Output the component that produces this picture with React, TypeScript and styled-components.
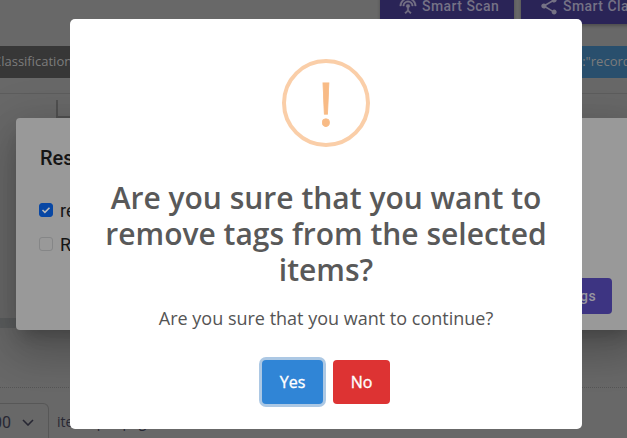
import React from 'react';
import styled, { createGlobalStyle } from 'styled-components';

const GlobalStyle = createGlobalStyle`
  * { box-sizing: border-box; }
  html, body { margin: 0; overflow: hidden; background: #686868; }
  body { font-family: 'Open Sans', 'Noto Sans', sans-serif; }
`;

const Screen = styled.div`
  position: relative;
  width: 627px;
  height: 438px;
  overflow: hidden;
  background: #686868;
`;

const Page = styled.main`
  display: flex;
  flex-direction: column;
  height: 438px;

  > * { flex: none; }
`;

const Toolbar = styled.div`
  display: flex;
  gap: 7px;
  height: 46px;
  padding-left: 380px;
`;

const ToolButton = styled.div<{ $width: number; $indent: number }>`
  display: flex;
  flex: none;
  align-items: center;
  gap: 5px;
  width: ${p => p.$width}px;
  height: 36px;
  margin-top: -12px;
  padding-left: ${p => p.$indent}px;
  background: #2a2457;
  box-shadow: 0 2px 3px rgba(0, 0, 0, 0.25);
  color: #757285;
  font: 500 14px Roboto, sans-serif;
  letter-spacing: 0.46px;
  white-space: nowrap;

  svg { flex: none; }
`;

const TagStrip = styled.div`
  display: flex;
  justify-content: space-between;
  height: 32px;
`;

const Tag = styled.div<{ $width: number; $fill: string; $shift: number }>`
  width: ${p => p.$width}px;
  background: ${p => p.$fill};
  color: #7c7c7c;
  font-size: 13px;
  line-height: 31px;
  white-space: nowrap;
  overflow: hidden;
  text-indent: ${p => p.$shift}px;
`;

const Results = styled.section`
  height: 225px;
  margin-top: 15px;
  padding: 6px 0 0 56px;
  border-top: 1px solid #5d5d5d;
`;

const TreeBranch = styled.div`
  width: 60px;
  height: 18px;
  border-left: 2px solid #505050;
  border-bottom: 2px solid #505050;
`;

const ScrollTrack = styled.div`
  height: 10px;
  background: #5b5d5e;
`;

const Pager = styled.footer`
  display: flex;
  gap: 8px;
  margin-top: 59px;
  padding-top: 15px;
  border-top: 1px dotted #555;
  color: #272733;
  font-size: 14px;
  line-height: 38px;
`;

const PageSize = styled.div`
  display: flex;
  align-items: center;
  gap: 11px;
  width: 49px;
  height: 38px;
  border: 1px solid #575757;
  border-left: 0;
  border-radius: 0 6px 0 0;
  font: 16px Roboto, sans-serif;

  span { margin-left: -7px; }
`;

const RestoreDialog = styled.section`
  position: absolute;
  top: 118px;
  left: 16px;
  display: flex;
  flex-direction: column;
  width: 620px;
  height: 212px;
  padding: 28px 24px 16px;
  border-radius: 4px;
  background: #999;
  box-shadow: 0 11px 15px -7px rgba(0, 0, 0, 0.2), 0 24px 38px 3px rgba(0, 0, 0, 0.14),
    0 9px 46px 8px rgba(0, 0, 0, 0.12);
  color: #151515;
  font-family: Roboto, sans-serif;
`;

const DialogTitle = styled.h2`
  margin: 0 0 28px;
  font-size: 20px;
  font-weight: 500;
  line-height: 24px;
`;

const Option = styled.div`
  display: flex;
  align-items: center;
  gap: 7px;
  height: 24px;
  margin-bottom: 10px;
  margin-left: -1px;
  font-size: 18px;
`;

const CheckBox = styled.span<{ $on?: boolean }>`
  display: grid;
  place-items: center;
  width: 14px;
  height: 14px;
  border: 1px solid ${p => (p.$on ? '#0847a4' : '#858687')};
  border-radius: 3px;
  background: ${p => (p.$on ? '#0847a4' : '#999')};
`;

const ApplyButton = styled.div`
  align-self: flex-end;
  width: 120px;
  height: 36px;
  margin-top: auto;
  padding-right: 16px;
  border-radius: 4px;
  background: #3d3482;
  color: #97959f;
  font-size: 14px;
  font-weight: 500;
  letter-spacing: 0.4px;
  line-height: 36px;
  text-align: right;
`;

const Alert = styled.section`
  position: absolute;
  top: 19px;
  left: 70px;
  display: flex;
  flex-direction: column;
  align-items: center;
  width: 512px;
  height: 410px;
  padding-top: 40px;
  border-radius: 5px;
  background: #fff;
  color: #545454;
  text-align: center;
`;

const WarningIcon = styled.div`
  display: flex;
  align-items: center;
  justify-content: center;
  width: 88px;
  height: 88px;
  border: 4px solid #facea8;
  border-radius: 50%;
  color: #f8bb86;
  font-size: 60px;
  line-height: 80px;
  -webkit-text-stroke: 0.8px #f8bb86;
`;

const AlertTitle = styled.h2`
  width: 472px;
  margin: 33px 0 0;
  color: #595959;
  font-size: 30px;
  font-weight: 600;
  line-height: 36px;
`;

const AlertText = styled.p`
  margin: 18px 0 0;
  font-size: 18px;
  line-height: 25px;
`;

const Actions = styled.div`
  display: flex;
  gap: 10px;
  margin-top: 29px;
`;

const ActionButton = styled.button<{ $fill: string; $width: number; $focused?: boolean }>`
  width: ${p => p.$width}px;
  height: 44px;
  padding: 0;
  border: 0;
  border-radius: 4px;
  background: ${p => p.$fill};
  box-shadow: ${p => (p.$focused ? '0 0 0 3px #acc8e4' : 'none')};
  color: #fff;
  font: 400 16px 'Open Sans', sans-serif;
  -webkit-text-stroke: 0.35px #fff;
  outline: none;
`;

const AntennaIcon = () => (
  <svg width="18" height="18" viewBox="0 0 24 24" fill="currentColor">
    <path d="M12 5c-3.87 0-7 3.13-7 7h2c0-2.76 2.24-5 5-5s5 2.24 5 5h2c0-3.87-3.13-7-7-7zm1 9.29c.88-.39 1.5-1.26 1.5-2.29a2.5 2.5 0 0 0-5 0c0 1.02.62 1.9 1.5 2.29v3.3L7.59 21 9 22.41l3-3 3 3L16.41 21 13 17.59v-3.3zM12 1C5.93 1 1 5.93 1 12h2a9 9 0 0 1 18 0h2c0-6.07-4.93-11-11-11z" stroke="currentColor" strokeWidth="0.5" />
  </svg>
);

const ShareIcon = () => (
  <svg width="18" height="18" viewBox="1.5 1.5 21 21" fill="currentColor">
    <path d="M18 16.08c-.76 0-1.44.3-1.96.77L8.91 12.7c.05-.23.09-.46.09-.7s-.04-.47-.09-.7l7.05-4.11c.54.5 1.25.81 2.04.81 1.66 0 3-1.34 3-3s-1.34-3-3-3-3 1.34-3 3c0 .24.04.47.09.7L8.04 9.81C7.5 9.31 6.79 9 6 9c-1.66 0-3 1.34-3 3s1.34 3 3 3c.79 0 1.5-.31 2.04-.81l7.12 4.16c-.05.21-.08.43-.08.65 0 1.61 1.31 2.92 2.92 2.92s2.92-1.31 2.92-2.92-1.31-2.92-2.92-2.92z" />
  </svg>
);

export default function App() {
  return (
    <>
      <GlobalStyle />
      <Screen>
        <Page>
          <Toolbar>
            <ToolButton $width={134} $indent={19}><AntennaIcon />Smart Scan</ToolButton>
            <ToolButton $width={140} $indent={19}><ShareIcon />Smart Classify</ToolButton>
          </Toolbar>
          <TagStrip>
            <Tag $width={300} $fill="#373737" $shift={-7}>Classification</Tag>
            <Tag $width={47} $fill="#294f6d" $shift={-4}>s:"records"</Tag>
          </TagStrip>
          <Results><TreeBranch /></Results>
          <ScrollTrack />
          <Pager>
            <PageSize>
              <span>00</span>
              <svg width="12" height="7" viewBox="0 0 12 7" fill="none" stroke="currentColor" strokeWidth="1.6">
                <path d="M1 1l5 5 5-5" />
              </svg>
            </PageSize>
            items per page
          </Pager>
        </Page>
        <RestoreDialog>
          <DialogTitle>Results</DialogTitle>
          <Option>
            <CheckBox $on>
              <svg width="10" height="8" viewBox="0 0 10 8" fill="none" stroke="#bbb" strokeWidth="1.6">
                <path d="M1.5 4l2.4 2.3L8.5 1.7" />
              </svg>
            </CheckBox>
            record
          </Option>
          <Option><CheckBox />Record</Option>
          <ApplyButton>Remove Tags</ApplyButton>
        </RestoreDialog>
        <Alert>
          <WarningIcon>!</WarningIcon>
          <AlertTitle>Are you sure that you want to remove tags from the selected items?</AlertTitle>
          <AlertText>Are you sure that you want to continue?</AlertText>
          <Actions>
            <ActionButton $fill="#3085d6" $width={61} $focused>Yes</ActionButton>
            <ActionButton $fill="#dd3333" $width={57}>No</ActionButton>
          </Actions>
        </Alert>
      </Screen>
    </>
  );
}
